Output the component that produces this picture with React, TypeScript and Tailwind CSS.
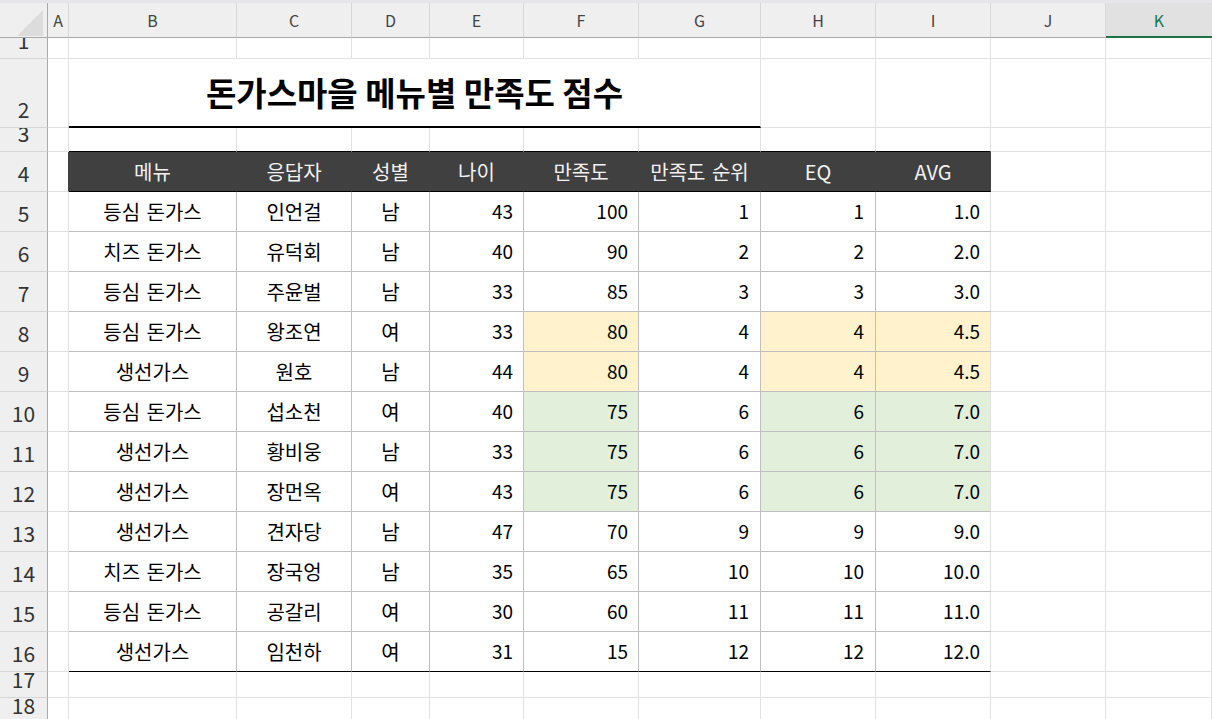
import React from "react";

type Row = [string, string, string, number, number, number, number, string, "" | "y" | "g"];

const data: Row[] = [
  ["등심 돈가스", "인언걸", "남", 43, 100, 1, 1, "1.0", ""],
  ["치즈 돈가스", "유덕회", "남", 40, 90, 2, 2, "2.0", ""],
  ["등심 돈가스", "주윤벌", "남", 33, 85, 3, 3, "3.0", ""],
  ["등심 돈가스", "왕조연", "여", 33, 80, 4, 4, "4.5", "y"],
  ["생선가스", "원호", "남", 44, 80, 4, 4, "4.5", "y"],
  ["등심 돈가스", "섭소천", "여", 40, 75, 6, 6, "7.0", "g"],
  ["생선가스", "황비웅", "남", 33, 75, 6, 6, "7.0", "g"],
  ["생선가스", "장먼옥", "여", 43, 75, 6, 6, "7.0", "g"],
  ["생선가스", "견자당", "남", 47, 70, 9, 9, "9.0", ""],
  ["치즈 돈가스", "장국엉", "남", 35, 65, 10, 10, "10.0", ""],
  ["등심 돈가스", "공갈리", "여", 30, 60, 11, 11, "11.0", ""],
  ["생선가스", "임천하", "여", 31, 15, 12, 12, "12.0", ""],
];

const cols = ["A", "B", "C", "D", "E", "F", "G", "H", "I", "J", "K"];

function RowHead({ n }: { n: number }) {
  return (
    <div className="flex items-end justify-center overflow-hidden bg-[#efefef] border-r border-b border-r-[#a9a9a9] border-b-[#d6d6d6] pb-[7px] text-[21px] leading-[21px] text-[#333]">
      {n}
    </div>
  );
}

function Empty({ extra = "" }: { extra?: string }) {
  return <div className={"bg-white border-r border-b border-[#e1e1e1] " + extra} />;
}

export default function App() {
  return (
    <div className="h-[719px] w-[1212px] overflow-hidden bg-white font-['Noto_Sans_CJK_KR','Noto_Sans',sans-serif]">
      <div className="h-[3px] bg-[#e6e6ea]" />
      <div className="grid grid-cols-[48px_21px_168px_115px_78px_94px_115px_122px_115px_115px_115px_1fr] grid-rows-[35px_21px_69px_24px_repeat(13,40px)_26px_26px]">
        {/* column header row */}
        <div className="relative bg-[#efefef] border-r border-b border-r-[#a9a9a9] border-b-[#a9a9a9]">
          <svg className="absolute left-0 top-0" width="47" height="34" viewBox="0 0 47 34">
            <polygon points="17,33 43,33 43,7" fill="#dcdcdc" />
          </svg>
        </div>
        {cols.map((c) =>
          c === "K" ? (
            <div
              key={c}
              className="flex items-center justify-center bg-[#e1e1e1] border-b-2 border-b-[#217346] text-[16px] text-[#217346]"
            >
              {c}
            </div>
          ) : (
            <div
              key={c}
              className="flex items-center justify-center bg-[#efefef] border-r border-b border-r-[#d6d6d6] border-b-[#a9a9a9] text-[16px] text-[#444]"
            >
              {c}
            </div>
          )
        )}

        {/* row 1 */}
        <RowHead n={1} />
        {cols.map((c) => (
          <Empty key={"r1" + c} />
        ))}

        {/* row 2 */}
        <RowHead n={2} />
        <Empty />
        <div className="col-span-6 flex items-center justify-center bg-white border-b-2 border-b-black border-r border-r-[#e1e1e1] text-[33px] font-bold text-black whitespace-nowrap">
          돈가스마을 메뉴별 만족도 점수
        </div>
        <Empty />
        <Empty />
        <Empty />
        <Empty />

        {/* row 3 */}
        <RowHead n={3} />
        <Empty />
        {["B", "C", "D", "E", "F", "G", "H", "I"].map((c) => (
          <div key={"r3" + c} className="bg-white border-r border-b border-r-[#e1e1e1] border-b-black" />
        ))}
        <Empty />
        <Empty />

        {/* row 4 header */}
        <RowHead n={4} />
        <div className="bg-white border-b border-r border-b-[#e1e1e1] border-r-[#404040]" />
        {["메뉴", "응답자", "성별", "나이", "만족도", "만족도 순위", "EQ", "AVG"].map((h) => (
          <div
            key={h}
            className="flex items-center justify-center bg-[#404040] border-r border-b border-r-[#404040] border-b-black text-[20px] text-[#f2f2f2] whitespace-nowrap [word-spacing:2px]"
          >
            {h}
          </div>
        ))}
        <Empty />
        <Empty />

        {/* data rows */}
        {data.map((r, i) => {
          const last = i === data.length - 1;
          const bb = last ? "border-b-black" : "border-b-[#bfbfbf]";
          const hl = r[8] === "y" ? "bg-[#fff2cc]" : r[8] === "g" ? "bg-[#e2efda]" : "bg-white";
          const base = "flex items-center border-r border-b text-black whitespace-nowrap " + bb;
          const ko = " text-[20px] [word-spacing:2px] justify-center bg-white border-r-[#bfbfbf]";
          return (
            <React.Fragment key={"d" + i}>
              <RowHead n={i + 5} />
              <Empty />
              <div className={base + ko}>{r[0]}</div>
              <div className={base + ko}>{r[1]}</div>
              <div className={base + ko}>{r[2]}</div>
              <div className={base + " text-[19px] justify-end pr-[10px] bg-white border-r-[#bfbfbf]"}>{r[3]}</div>
              <div className={base + " text-[19px] justify-end pr-[10px] border-r-[#bfbfbf] " + hl}>{r[4]}</div>
              <div className={base + " text-[19px] justify-end pr-[11px] bg-white border-r-[#bfbfbf]"}>{r[5]}</div>
              <div className={base + " text-[19px] justify-end pr-[11px] border-r-[#bfbfbf] " + hl}>{r[6]}</div>
              <div className={base + " text-[19px] justify-end pr-[10px] border-r-[#e1e1e1] " + hl}>{r[7]}</div>
              <Empty />
              <Empty />
            </React.Fragment>
          );
        })}

        {/* rows 17, 18 */}
        {[17, 18].map((n) => (
          <React.Fragment key={"e" + n}>
            <RowHead n={n} />
            {cols.map((c) => (
              <Empty key={"e" + n + c} />
            ))}
          </React.Fragment>
        ))}
      </div>
    </div>
  );
}
